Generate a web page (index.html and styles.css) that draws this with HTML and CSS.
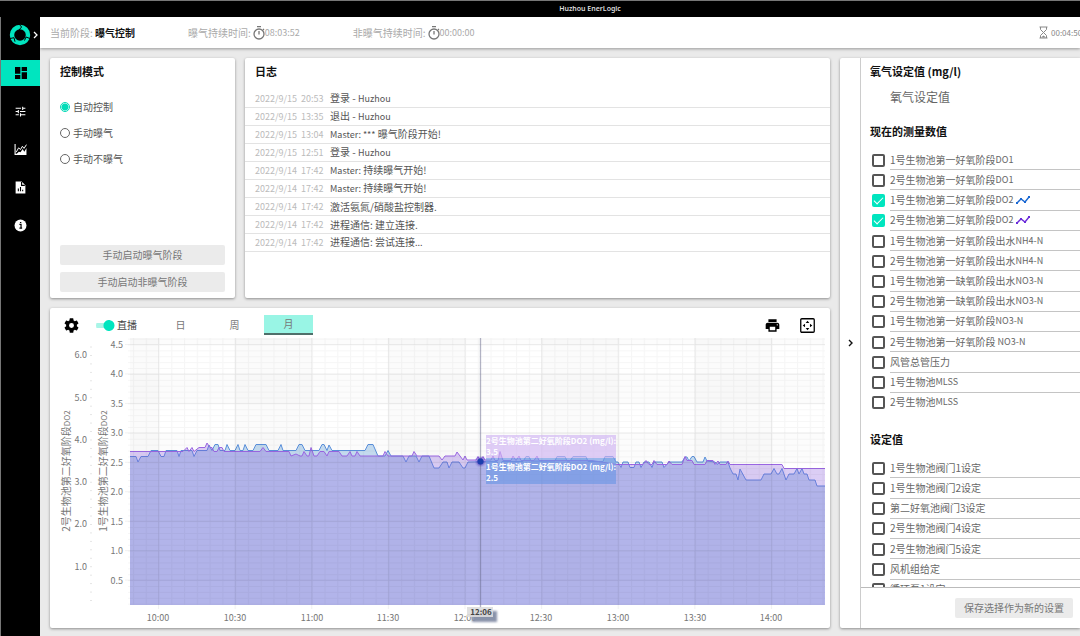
FILE: index.html
```html
<!DOCTYPE html>
<html lang="zh-CN">
<head>
<meta charset="utf-8">
<title>Huzhou EnerLogic</title>
<link rel="stylesheet" href="styles.css">
</head>
<body>
<div class="app">
  <div class="titlebar">Huzhou EnerLogic</div>
  <nav class="sidebar">
    <div class="brand">
      <svg class="logo" viewBox="0 0 22 22"><circle cx="11" cy="11" r="8" fill="none" stroke="#00e5bf" stroke-width="4.400"/><path d="M10 0l2.600 3-2.600 3M1 14.500l4-.8 1 4M21 14.500l-4-1.500-1.500 3.500" fill="none" stroke="#000" stroke-width="1"/></svg>
      <svg class="chevron" viewBox="0 0 5 8"><path d="M1 1l3 3-3 3" fill="none" stroke="#fff" stroke-width="1.300"/></svg>
    </div>
    <a class="nav-item active" href="#dashboard" aria-label="Dashboard"><svg viewBox="0 0 24 24"><path d="M3 13h8V3H3zm0 8h8v-6H3zm10 0h8V11h-8zm0-18v6h8V3z"/></svg></a>
    <a class="nav-item" href="#settings" aria-label="Settings"><svg viewBox="0 0 24 24"><path d="M3 17v2h6v-2zM3 5v2h10V5zm10 16v-2h8v-2h-8v-2h-2v6zM7 9v2H3v2h4v2h2V9zm14 4v-2H11v2zm-6-4h2V7h4V5h-4V3h-2z"/></svg></a>
    <a class="nav-item" href="#charts" aria-label="Charts"><svg viewBox="0 0 24 24"><path d="M1 2v20h22V9l-4 7-3-5-4 6-3-1-4 4H3V2z"/><path d="M4 17L8.500 9l3.500 3 3.500-6 3 4L23 3" fill="none" stroke="#fff" stroke-width="1.800"/></svg></a>
    <a class="nav-item" href="#reports" aria-label="Reports"><svg viewBox="0 0 24 24"><path d="M3 1h11l7 7v15H3z"/><path d="M14 2v6h6M8 19v-5M12 19v-8M16 19v-3" fill="none" stroke="#000" stroke-width="2"/></svg></a>
    <a class="nav-item" href="#info" aria-label="Info"><svg viewBox="0 0 24 24"><circle cx="12" cy="12" r="11"/><path d="M10 10h3v7M10 17h5M11 6.500h2.500" fill="none" stroke="#000" stroke-width="2.200"/></svg></a>
  </nav>

  <header class="status">
    <div class="stage">当前阶段: <b>曝气控制</b></div>
    <div class="timer">曝气持续时间:
      <svg class="watch" viewBox="0 0 12 14"><circle cx="6" cy="8" r="5" fill="none" stroke="#777" stroke-width="1.300"/><path d="M4 .7h4M6 5v3.500M10 3l1 1" stroke="#777" stroke-width="1.300"/></svg><span class="num">08:03:52</span></div>
    <div class="timer">非曝气持续时间:
      <svg class="watch" viewBox="0 0 12 14"><circle cx="6" cy="8" r="5" fill="none" stroke="#777" stroke-width="1.300"/><path d="M4 .7h4M6 5v3.500M10 3l1 1" stroke="#777" stroke-width="1.300"/></svg><span class="num">00:00:00</span></div>
    <div class="countdown">
      <svg class="glass" viewBox="0 0 9 13"><path d="M.5 1h8M.5 12h8M1.500 1v2.500l3 3 3-3V1M1.500 12V9.500l3-3 3 3V12" fill="none" stroke="#888"/><path d="M2 11.500l2.500-2 2.500 2z" fill="#888"/></svg><span class="num">00:04:50</span></div>
  </header>

  <main class="content">
    <section class="card mode">
      <h2>控制模式</h2>
      <div class="radios">
        <label><input type="radio" name="mode" checked>自动控制</label>
        <label><input type="radio" name="mode">手动曝气</label>
        <label><input type="radio" name="mode">手动不曝气</label>
      </div>
      <div class="actions">
        <button class="btn" type="button">手动启动曝气阶段</button>
        <button class="btn" type="button">手动启动非曝气阶段</button>
      </div>
    </section>

    <section class="card log">
      <h2>日志</h2>
      <ul class="log-list">
        <li><time>2022/9/15&nbsp; 20:53</time><span>登录 - <i>Huzhou</i></span></li>
        <li><time>2022/9/15&nbsp; 13:35</time><span>退出 - <i>Huzhou</i></span></li>
        <li><time>2022/9/15&nbsp; 13:04</time><span><i>Master: ***</i> 曝气阶段开始!</span></li>
        <li><time>2022/9/15&nbsp; 12:51</time><span>登录 - <i>Huzhou</i></span></li>
        <li><time>2022/9/14&nbsp; 17:42</time><span><i>Master:</i> 持续曝气开始!</span></li>
        <li><time>2022/9/14&nbsp; 17:42</time><span><i>Master:</i> 持续曝气开始!</span></li>
        <li><time>2022/9/14&nbsp; 17:42</time><span>激活氨氮/硝酸盐控制器.</span></li>
        <li><time>2022/9/14&nbsp; 17:42</time><span>进程通信: 建立连接.</span></li>
        <li><time>2022/9/14&nbsp; 17:42</time><span>进程通信: 尝试连接<i>...</i></span></li>
      </ul>
    </section>

    <section class="card chart">
      <div class="toolbar">
        <button class="icon-btn" type="button" aria-label="Settings"><svg viewBox="2 2 20 20"><path d="M19.140 12.940c.04-.3.060-.61.060-.94s-.02-.64-.07-.94l2.030-1.580a.49.490 0 0 0 .12-.61l-1.920-3.320a.49.490 0 0 0-.59-.22l-2.390.96a7 7 0 0 0-1.620-.94l-.36-2.540A.48.480 0 0 0 13.920 2.400h-3.840a.48.480 0 0 0-.47.410l-.36 2.540c-.59.240-1.130.57-1.620.94l-2.390-.96a.48.480 0 0 0-.59.220L2.740 8.870a.47.470 0 0 0 .12.610l2.030 1.580a6.500 6.500 0 0 0 0 1.880l-2.030 1.580a.49.490 0 0 0-.12.610l1.920 3.320c.12.220.37.290.59.220l2.390-.96c.5.380 1.030.7 1.620.94l.36 2.540c.05.240.24.410.48.410h3.840c.24 0 .44-.17.470-.41l.36-2.540a7 7 0 0 0 1.620-.94l2.390.96c.22.080.47 0 .59-.22l1.920-3.320a.47.470 0 0 0-.12-.61zM12 15.300a3.300 3.300 0 1 1 0-6.600 3.300 3.300 0 0 1 0 6.600z"/></svg></button>
        <label class="live"><input type="checkbox" class="switch" checked>直播</label>
        <div class="range">
          <button type="button">日</button>
          <button type="button">周</button>
          <button type="button" class="on">月</button>
        </div>
        <div class="tools">
          <button class="icon-btn" type="button" aria-label="Print"><svg viewBox="1 2 22 20"><path d="M19 8H5c-1.700 0-3 1.300-3 3v6h4v4h12v-4h4v-6c0-1.700-1.300-3-3-3zm-3 11H8v-5h8zm3-7a1 1 0 1 1 0-2 1 1 0 0 1 0 2zM18 3H6v4h12z"/></svg></button>
          <button class="icon-btn" type="button" aria-label="Fit"><svg viewBox="0 0 14 14"><rect x=".7" y=".7" width="12.600" height="12.600" rx="1" fill="none" stroke="#000" stroke-width="1.200"/><path d="M7 2.500L8.700 4.700H5.300zM7 11.500L8.700 9.300H5.300zM2.500 7L4.700 5.300v3.400zM11.500 7L9.300 5.300v3.400z"/></svg></button>
        </div>
      </div>
      <svg class="plot" viewBox="50 338 780 290">
        <defs>
          <clipPath id="area"><rect x="130" y="338" width="695" height="267"/></clipPath>
          <pattern id="minor" x="158.500" y="344.500" width="12.770" height="5.890" patternUnits="userSpaceOnUse"><path d="M0 .5h12.770M.5 0v5.890" stroke="#000" stroke-opacity=".035"/></pattern>
          <pattern id="major" x="158" y="344" width="76.620" height="29.450" patternUnits="userSpaceOnUse"><path d="M0 .5h76.620M.5 0v29.450" stroke="#000" stroke-opacity=".055"/></pattern>
          <pattern id="cols" x="158.500" y="338" width="153.240" height="267" patternUnits="userSpaceOnUse"><rect x="76.620" width="76.620" height="267" fill="#000" fill-opacity=".016"/></pattern>
          <pattern id="rows" x="130" y="344.500" width="695" height="58.900" patternUnits="userSpaceOnUse"><rect y="29.450" width="695" height="29.450" fill="#000" fill-opacity=".01"/></pattern>
          <pattern id="ticks" x="88" y="355" width="4" height="8.450" patternUnits="userSpaceOnUse"><path d="M2 .5h2" stroke="#e4e4e4"/></pattern>
          <filter id="soft"><feGaussianBlur stdDeviation="1"/></filter>
        </defs>
        <rect x="130" y="338" width="695" height="267" fill="url(#cols)"/>
        <rect x="130" y="338" width="695" height="267" fill="url(#rows)"/>
        <g clip-path="url(#area)">
          <path class="blue-area" d="M120 615V456.500H136L138 462 141 456.500H148L151 450.500H158L161 456.500H164L166 450.500H177L179 456.500 181 450.500H192L194 456.500 197 450.500H207L209 445 212 450.500 215 444.500H218L220 450.500H225L227 444.500 230 450.500H235L238 444.500 240 450.500H243L245 444.500 248 450.500H253L256 444.500H266L269 450.500H278L281 444.500 283 450.500H296L299 444.500H302L305 450.500H319L322 444.500H324L327 450.500 329 445 332 450.500H365L368 444.500H373L378 456H385L388 450.500 391 456H403L406 462 409 456H416L419 462 422 456H429L434 468H439L443 462H447L449 468 452 462H459L463 468H465L468 462 497 461.500 499 467 502 461.500H523L526 456.500H529L531 461H555L557 456.500H565L567 461H570L573 456.500H586L588 461.500H603L605 456.500H613L616 462H618L621 467.500 623 462H628L630 467.500H634L636 462H639L641 467.500 644 462H649L652 467.500 654 462H662L664 467.500 669 462H682L685 457H687L689 461 692 456.500H694L697 462H703L705 457 707 461 715 462 717 464.500 720 462H728L730 468 733 474H736L738 480 740 469 746 480H761L764 474H771L774 468.500 777 474H779L782 468.500 786 480 789 474H794L797 468.500 799 474 802 468.500 804 474H807L809 480H815L817 486H835V615Z"/>
          <path class="violet-area" d="M120 615V451.500H183L187 447.500 189 451.500 192 447.500 194 451.500 199 447.500H205L207 443 210 447.500H212L214 451.500H217L219 447.500H222L224 451.500H260L263 447.500 266 451.500H289L291 456 296 454 300 456H302L304 451.500 307 456H309L311 447.500 314 456H317L320 451.500H324L327 456 329 451.500H339L342 456H347L350 451.500 352 456H355L357 451.500 360 456H383L385 451.500 388 456H412L414 451.500 417 456H439L442 460 445 456H455L457 452 463 460 465 456 467 460H476L478 456.500 480 460 483 456.500 485 460H491L493 456 495 460.500H498L500 451.500 503 460.500H511L513 456 516 460.500 519 456 521 460.500H534L537 456 539 460.500H592L617 464.500H643L646 460.500 649 464.500H652L654 460.500 657 464.500H667L669 461 672 464.500H682L685 456.500 687 460.500H692L694 464.500H705L707 460.500H713L715 464.500 718 461 720 464.500H726L728 461 730 464.500H782L784 468.500H835V615Z"/>
        </g>
        <rect x="128" y="338" width="697" height="267" fill="url(#minor)"/>
        <rect x="125" y="338" width="700" height="271" fill="url(#major)"/>
        <rect x="88" y="345" width="4" height="258" fill="url(#ticks)"/>
        <path d="M480.500 338v270" stroke="#66688a" stroke-opacity=".5" stroke-width="1.300"/>
        <circle cx="480.500" cy="461.500" r="4" fill="#3c2bb5" fill-opacity=".7" filter="url(#soft)"/>
        <circle cx="480.500" cy="461.500" r="3" fill="#1c3fae"/>
        <g class="tip">
          <rect x="486" y="435" width="130" height="23" fill="#d0b4f2" fill-opacity=".65"/>
          <rect x="486" y="458" width="130" height="26" fill="#6f98e4" fill-opacity=".68"/>
          <text x="486" y="444">2号生物池第二好氧阶段<tspan class="latin">DO2 (mg/l):</tspan></text><text x="486" y="455">3.5</text>
          <text x="486" y="470">1号生物池第二好氧阶段<tspan class="latin">DO2 (mg/l):</tspan></text><text x="486" y="481">2.5</text>
        </g>
        <g class="axis end">
          <text x="87" y="358">6.0</text><text x="87" y="401">5.0</text><text x="87" y="443">4.0</text><text x="87" y="485">3.0</text><text x="87" y="527">2.0</text><text x="87" y="570">1.0</text>
          <text x="123" y="348">4.5</text><text x="123" y="377">4.0</text><text x="123" y="407">3.5</text><text x="123" y="436">3.0</text><text x="123" y="466">2.5</text><text x="123" y="495">2.0</text><text x="123" y="525">1.5</text><text x="123" y="554">1.0</text><text x="123" y="584">0.5</text>
        </g>
        <g class="axis mid">
          <text x="158" y="621">10:00</text><text x="235" y="621">10:30</text><text x="312" y="621">11:00</text><text x="388" y="621">11:30</text><text x="465" y="621">12:00</text><text x="541" y="621">12:30</text><text x="618" y="621">13:00</text><text x="695" y="621">13:30</text><text x="771" y="621">14:00</text>
          <text class="name" transform="translate(70 471) rotate(-90)">2号生物池第二好氧阶段<tspan class="latin">DO2</tspan></text>
          <text class="name" transform="translate(107 471) rotate(-90)">1号生物池第二好氧阶段<tspan class="latin">DO2</tspan></text>
        </g>
        <rect x="472" y="611" width="25" height="11" fill="#8993aa" filter="url(#soft)"/>
        <rect x="467" y="607" width="26" height="10" fill="#ddd" fill-opacity=".9"/>
        <text class="stamp" x="481" y="615">12:06</text>
      </svg>
    </section>

    <aside class="card panel">
      <button class="collapse" type="button" aria-label="Collapse"><svg viewBox="0 0 5 8"><path d="M1 1l3 3-3 3" fill="none" stroke="#111" stroke-width="1.400"/></svg></button>
      <div class="panel-main">
        <div class="panel-scroll">
          <h2>氧气设定值 (mg/l)</h2>
          <p class="setpoint">氧气设定值</p>
          <h2>现在的测量数值</h2>
          <div class="checks measured">
            <label><input type="checkbox"><span>1号生物池第一好氧阶段<i>DO1</i></span></label>
            <label><input type="checkbox"><span>2号生物池第一好氧阶段<i>DO1</i></span></label>
            <label><input type="checkbox" checked><span>1号生物池第二好氧阶段<i>DO2</i><svg class="spark" viewBox="0 0 14 8"><path d="M1 7l4-4 4 3 4-5" fill="none" stroke="#1967d2" stroke-width="1.400"/><path d="M0 6h2v2H0zM4 2h2v2H4zM8 5h2v2H8zM12 0h2v2h-2z" fill="#1967d2"/></svg></span></label>
            <label><input type="checkbox" checked><span>2号生物池第二好氧阶段<i>DO2</i><svg class="spark" viewBox="0 0 14 8"><path d="M1 7l4-4 4 3 4-5" fill="none" stroke="#6a2bd9" stroke-width="1.400"/><path d="M0 6h2v2H0zM4 2h2v2H4zM8 5h2v2H8zM12 0h2v2h-2z" fill="#6a2bd9"/></svg></span></label>
            <label><input type="checkbox"><span>1号生物池第一好氧阶段出水<i>NH4-N</i></span></label>
            <label><input type="checkbox"><span>2号生物池第一好氧阶段出水<i>NH4-N</i></span></label>
            <label><input type="checkbox"><span>1号生物池第一缺氧阶段出水<i>NO3-N</i></span></label>
            <label><input type="checkbox"><span>2号生物池第一缺氧阶段出水<i>NO3-N</i></span></label>
            <label><input type="checkbox"><span>1号生物池第一好氧阶段<i>NO3-N</i></span></label>
            <label><input type="checkbox"><span>2号生物池第一好氧阶段<i>&nbsp;NO3-N</i></span></label>
            <label><input type="checkbox"><span>风管总管压力</span></label>
            <label><input type="checkbox"><span>1号生物池<i>MLSS</i></span></label>
            <label><input type="checkbox"><span>2号生物池<i>MLSS</i></span></label>
          </div>
          <h2>设定值</h2>
          <div class="checks targets">
            <label><input type="checkbox"><span>1号生物池阀门1设定</span></label>
            <label><input type="checkbox"><span>1号生物池阀门2设定</span></label>
            <label><input type="checkbox"><span>第二好氧池阀门3设定</span></label>
            <label><input type="checkbox"><span>2号生物池阀门4设定</span></label>
            <label><input type="checkbox"><span>2号生物池阀门5设定</span></label>
            <label><input type="checkbox"><span>风机组给定</span></label>
            <label><input type="checkbox"><span>循环泵1设定</span></label>
          </div>
        </div>
        <footer><button class="btn" type="button">保存选择作为新的设置</button></footer>
      </div>
    </aside>
  </main>
</div>
</body>
</html>
```
FILE: styles.css
```css
* { box-sizing: border-box; }
body { margin: 0; background: #eaeaea; color: #666; font: 10px/16px "Noto Sans CJK SC", "Noto Sans", sans-serif; }
button, input { font: inherit; color: inherit; margin: 0; }
button { border: 0; background: none; padding: 0; }
h2 { margin: 0; font-size: 11px; line-height: 16px; font-weight: 700; color: #111; }
i { font-style: normal; font-size: 9px; }
svg { display: block; flex: none; }

.app { display: grid; grid-template: 17px 31px minmax(0, 1fr) / 40px minmax(0, 1fr); height: 100vh; }
.titlebar { grid-column: 1 / 3; padding-left: 100px; background: #000; border-top: 1px solid #777; color: #ddd; font: 600 7px/16px "Noto Sans", sans-serif; text-align: center; }

.sidebar { grid-row: 2 / 4; background: #000; border-left: 1px solid #777; display: flex; flex-direction: column; gap: 12px; }
.brand { display: flex; align-items: center; height: 31px; padding: 5px 0 0 8px; gap: 2px; }
.logo { width: 22px; height: 22px; }
.chevron { width: 5px; height: 8px; }
.nav-item { display: flex; align-items: center; justify-content: center; height: 26px; }
.nav-item svg { width: 13px; height: 13px; fill: #fff; }
.nav-item.active { background: #00e5bf; }
.nav-item.active svg { width: 16px; height: 16px; fill: #000; }

.status { display: flex; align-items: center; padding-left: 10px; background: #fff; color: #aaa; box-shadow: 0 1px 3px rgba(0, 0, 0, .35); overflow: hidden; z-index: 1; white-space: nowrap; }
.status b { color: #111; }
.num { font-size: 9px; }
.timer { display: flex; align-items: center; margin-left: 53px; }
.watch { width: 12px; height: 14px; margin-left: 2px; }
.countdown { display: flex; align-items: center; gap: 3px; width: 41px; margin-left: auto; color: #888; }
.countdown .num { font-size: 8px; }
.glass { width: 9px; height: 13px; }

.content { display: grid; grid-template: 240px minmax(0, 1fr) / 185px minmax(0, 1fr) 240px; gap: 10px; padding: 10px 0 8px 10px; }
.card { background: #fff; border-radius: 2px; box-shadow: 0 1px 3px rgba(0, 0, 0, .4); }

.mode { display: flex; flex-direction: column; padding: 5px 10px 6px; }
.radios { display: grid; grid-auto-rows: 26px; margin-top: 15px; }
.radios label { display: flex; align-items: center; gap: 3px; color: #555; }
.radios input { appearance: none; width: 10px; height: 10px; border: 1px solid #666; border-radius: 50%; }
.radios input:checked { border-color: #00d9b5; background: radial-gradient(#00dcb8 0 3px, #fff 4px); }
.actions { display: grid; gap: 7px; margin-top: auto; }
.btn { height: 20px; background: #ebebeb; border-radius: 2px; color: #777; }

.log { padding-top: 5px; }
.log h2 { padding-left: 10px; }
.log-list { display: grid; grid-auto-rows: 1fr; min-height: 161px; margin: 11px 0 0; padding: 0; list-style: none; }
.log-list li { display: flex; align-items: center; padding-left: 10px; border-bottom: 1px solid #e3e3e3; color: #555; }
.log-list time { width: 75px; color: #bbb; font-size: 9px; }

.chart { grid-column: 1 / 3; display: flex; flex-direction: column; }
.toolbar { display: flex; align-items: center; height: 30px; padding: 4px 15px 0 14px; }
.icon-btn svg { width: 15px; height: 15px; }
.live { display: flex; align-items: center; gap: 2px; margin-left: 17px; color: #444; }
.switch { appearance: none; width: 19px; height: 11px; background: radial-gradient(circle at 13px 50%, #00e5bf 5px, transparent 6px), linear-gradient(#a9f5e7, #a9f5e7) 0 50% / 15px 5px no-repeat; border-radius: 6px; }
.range { display: flex; gap: 5px; margin-left: 19px; }
.range button { width: 49px; height: 20px; color: #777; }
.range .on { background: #99f5e5; border-bottom: 2px solid #4f6f6a; }
.tools { display: flex; gap: 20px; margin-left: auto; }
.plot { width: 100%; min-height: 0; flex: 1; }
.blue-area { fill: rgba(89, 155, 212, .35); stroke: #5a90dc; }
.violet-area { fill: rgba(135, 88, 222, .3); stroke: #9a66e2; }
.axis { font-size: 9px; fill: #777; }
.axis .name { font-size: 10px; }
.axis .latin { font-size: 8px; }
.end { text-anchor: end; }
.mid, .stamp { text-anchor: middle; }
.tip { fill: #fff; font-size: 8px; font-weight: 700; }
.stamp { font-size: 8px; font-weight: 700; fill: #444; }

.panel { grid-area: 1 / 3 / 3 / 4; display: flex; min-height: 0; border-radius: 2px 0 0 2px; }
.collapse { width: 20px; display: flex; align-items: center; justify-content: center; }
.collapse svg { width: 5px; height: 8px; }
.panel-main { flex: 1; min-width: 0; display: flex; flex-direction: column; border-left: 1px solid #ccc; }
.panel-scroll { flex: 1; min-height: 0; overflow: hidden; padding: 5px 0 0 9px; }
.setpoint { margin: 8px 0 16px 20px; font-size: 12px; line-height: 20px; }
.checks { display: grid; grid-auto-rows: 1fr; padding-left: 2px; }
.measured { min-height: 263px; margin: 11px 0 18px; }
.targets { min-height: 142px; margin-top: 11px; }
.checks label { display: flex; align-items: center; gap: 5px; white-space: nowrap; }
.checks span { flex: 1; align-self: stretch; display: flex; align-items: center; border-bottom: 1px solid #c4c4c4; }
.measured label:last-child span { border-color: transparent; }
.checks input { appearance: none; width: 13px; height: 13px; border: 2px solid #555; border-radius: 2px; background: #fff; }
.checks input:checked { border: 0; background: #00e5bf; display: grid; place-items: center; }
.checks input:checked::before { content: ""; width: 8px; height: 4px; margin-bottom: 2px; border: solid #fff; border-width: 0 0 1px 1px; rotate: -45deg; }
.spark { width: 14px; height: 8px; margin-left: 3px; }
.panel footer { display: flex; align-items: center; justify-content: flex-end; height: 41px; padding-right: 7px; border-top: 1px solid #bbb; }
.panel footer .btn { padding: 0 9px; }
```
